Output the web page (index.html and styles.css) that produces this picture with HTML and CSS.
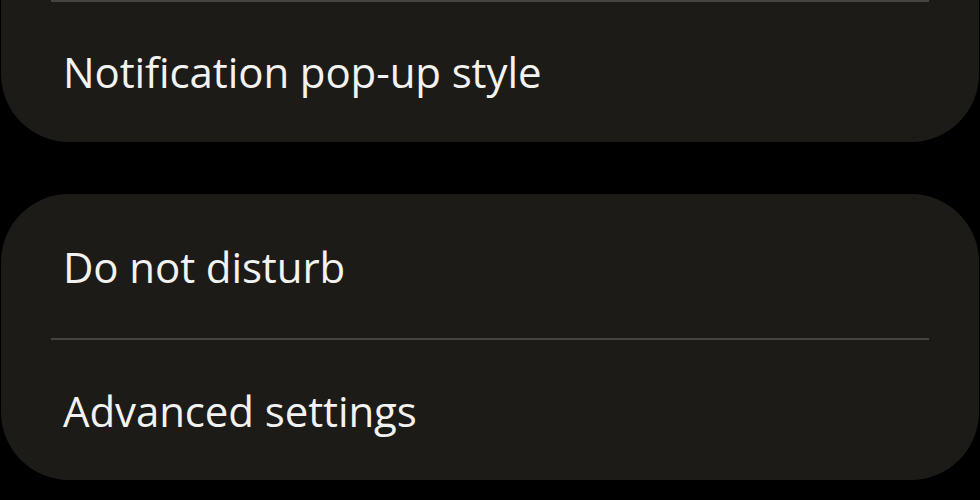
FILE: index.html
```html
<!doctype html>
<html>
	<head>
		<meta charset="utf-8">
		<title>Notifications</title>
		<link rel="stylesheet" href="styles.css">
	</head>
	<body>
		<div class="card card-cut">
			<div class="row divided">Notification pop-up style</div>
		</div>
		<div class="card">
			<div class="row row-first">Do not disturb</div>
			<div class="row divided">Advanced settings</div>
		</div>
	</body>
</html>
```

FILE: styles.css
```css
body {
	margin: 0;
	background-color: #000;
	font-family: "Open Sans", "Noto Sans", sans-serif;
	color: rgb(242,242,240);
}

.card {
	background-color: rgb(29,27,24);
	border-radius: 68px;
	margin: 0 1px;
}

.card-cut {
	border-top-left-radius: 0;
	border-top-right-radius: 0;
	margin-bottom: 52px;
}

.row {
	display: flex;
	align-items: center;
	height: 141px;
	padding: 0 62px;
	font-size: 42px;
	letter-spacing: -0.1px;
}

.row-first {
	height: 144px;
}

.divided {
	position: relative;
	height: 142px;
}

.card .row-first + .divided {
	height: 140px;
	padding-top: 2px;
}

.divided::before {
	content: "";
	position: absolute;
	top: 0;
	left: 50px;
	right: 50px;
	height: 2px;
	background-color: rgb(70,68,65);
}
```
